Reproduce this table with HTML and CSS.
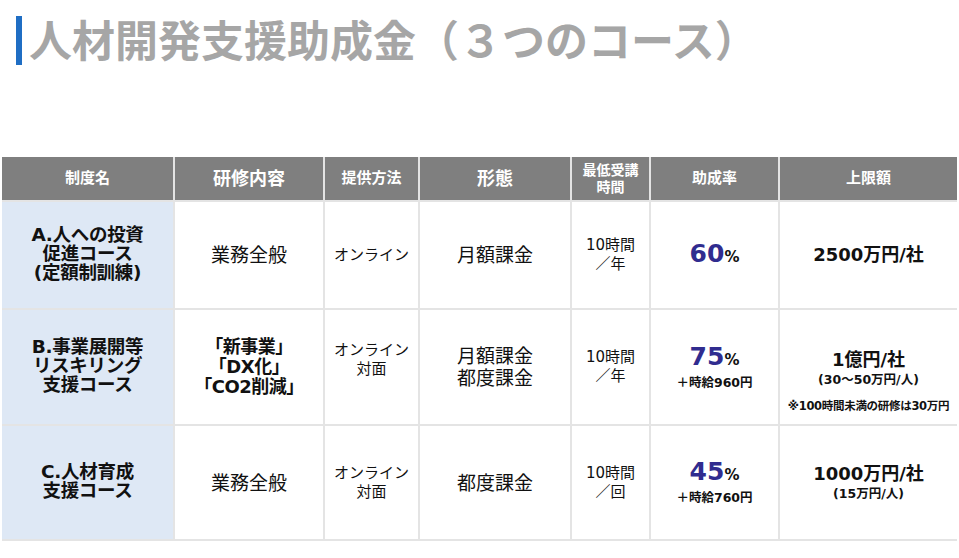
FILE: index.html
```html
<!DOCTYPE html>
<html lang="ja">
<head>
<meta charset="utf-8">
<title>人材開発支援助成金</title>
<link rel="stylesheet" href="styles.css">
</head>
<body>
<div class="page">
  <h1 class="title"><span class="bar"></span><span class="title-text">人材開発支援助成金（３つのコース）</span></h1>
  <div class="grid">
    <div class="cell th hs">制度名</div>
    <div class="cell th hl">研修内容</div>
    <div class="cell th hm">提供方法</div>
    <div class="cell th hl">形態</div>
    <div class="cell th hx">最低受講<br>時間</div>
    <div class="cell th hm">助成率</div>
    <div class="cell th hm">上限額</div>

    <div class="cell name">A.人への投資<br>促進コース<br>(定額制訓練)</div>
    <div class="cell big">業務全般</div>
    <div class="cell mid">オンライン</div>
    <div class="cell big">月額課金</div>
    <div class="cell mid">10時間<br>／年</div>
    <div class="cell"><div class="rate"><span class="pct">60</span><span class="pc">%</span></div></div>
    <div class="cell"><div class="amt">2500万円/社</div></div>

    <div class="cell name">B.事業展開等<br>リスキリング<br>支援コース</div>
    <div class="cell bold">「新事業」<br>「DX化」<br>「CO2削減」</div>
    <div class="cell mid up">オンライン<br>対面</div>
    <div class="cell big">月額課金<br>都度課金</div>
    <div class="cell mid">10時間<br>／年</div>
    <div class="cell"><div class="rate"><span class="pct">75</span><span class="pc">%</span></div><div class="sub">＋時給960円</div></div>
    <div class="cell lim2"><div class="amt">1億円/社</div><div class="sub">(30〜50万円/人)</div><div class="note">※100時間未満の研修は30万円</div></div>

    <div class="cell name">C.人材育成<br>支援コース</div>
    <div class="cell big">業務全般</div>
    <div class="cell mid">オンライン<br>対面</div>
    <div class="cell big">都度課金</div>
    <div class="cell mid">10時間<br>／回</div>
    <div class="cell"><div class="rate"><span class="pct">45</span><span class="pc">%</span></div><div class="sub">＋時給760円</div></div>
    <div class="cell"><div class="amt">1000万円/社</div><div class="sub">(15万円/人)</div></div>
  </div>
</div>
</body>
</html>
```

FILE: styles.css
```css
html, body {
  margin: 0;
  padding: 0;
  background: #ffffff;
}
body {
  font-family: "DejaVu Sans", "Noto Sans CJK JP", sans-serif;
  color: #111111;
}
.page {
  width: 959px;
  height: 558px;
  overflow: hidden;
}
.title {
  margin: 0;
  padding: 16px 0 0 16px;
  display: flex;
  align-items: center;
  height: 49px;
}
.bar {
  width: 6px;
  height: 49px;
  background: #1f6ec4;
  flex: none;
}
.title-text {
  margin-left: 7px;
  font-family: "Noto Sans CJK JP", sans-serif;
  font-size: 43px;
  font-weight: 700;
  color: #a6a6a6;
  line-height: 49px;
  position: relative;
  top: -2px;
}
.grid {
  margin: 92px 0 0 2px;
  width: 955px;
  display: grid;
  grid-template-columns: 171px 148px 93px 150px 77px 127px 177px;
  grid-template-rows: 43px 106px 114px 113px;
  gap: 2px;
  background: #e4e4e4;
  border-bottom: 2px solid #e4e4e4;
}
.cell {
  background: #ffffff;
  display: flex;
  flex-direction: column;
  align-items: center;
  justify-content: center;
  text-align: center;
  font-size: 15px;
  line-height: 19px;
  white-space: nowrap;
}
.th {
  background: #7f7f7f;
  color: #ffffff;
  font-weight: 700;
}
.hs { font-size: 15px; }
.hm { font-size: 15px; }
.hl { font-size: 18px; }
.hx { font-size: 14px; line-height: 17px; }
.name {
  background: #dee8f5;
  font-weight: 700;
  font-size: 18.5px;
  line-height: 19px;
  letter-spacing: -0.3px;
  padding-bottom: 4px;
}
.big {
  font-size: 19px;
  line-height: 22px;
}
.bold {
  font-weight: 700;
  font-size: 18px;
  line-height: 20px;
  letter-spacing: -0.5px;
}
.mid {
  font-size: 15px;
  line-height: 19px;
}
.up {
  padding-bottom: 14px;
}
.rate {
  line-height: 28px;
}
.pct {
  font-size: 25px;
  font-weight: 700;
  color: #302c8f;
}
.pc {
  font-size: 15px;
  font-weight: 700;
  color: #111111;
}
.sub {
  font-size: 12.5px;
  font-weight: 700;
  line-height: 18px;
}
.amt {
  font-size: 18px;
  font-weight: 700;
  line-height: 22px;
}
.note {
  margin-top: 10px;
  font-size: 11.5px;
  font-weight: 700;
  line-height: 14px;
  letter-spacing: -0.3px;
}
.lim2 { padding-top: 28px; }
```
